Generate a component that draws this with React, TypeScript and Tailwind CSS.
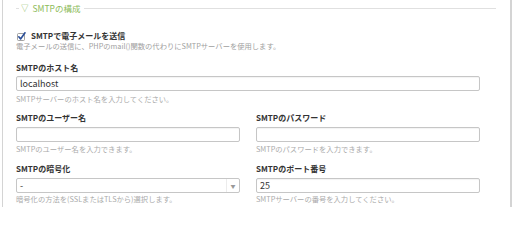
import React from 'react';

const font = { fontFamily: '"Noto Sans CJK JP", "Noto Sans", sans-serif' };

function Label({ children }: { children: React.ReactNode }) {
  return <div className="h-[10px] leading-[10px] text-[8px] font-bold text-[#333]">{children}</div>;
}

function Help({ children }: { children: React.ReactNode }) {
  return <div className="h-[10px] leading-[10px] text-[7.3px] text-[#aaa] whitespace-nowrap">{children}</div>;
}

function TextBox({ value, className = '' }: { value?: string; className?: string }) {
  return (
    <div className={`h-[15px] border border-[#c6c6c6] rounded-[2px] bg-white flex items-center pl-[3px] text-[9px] text-[#333] shadow-[inset_0_1px_1px_rgba(0,0,0,0.05)] ${className}`}>
      {value}
    </div>
  );
}

export default function App() {
  return (
    <div className="w-[512px] h-[207px] bg-white overflow-hidden" style={font}>
      <div className="ml-[2px] w-[510px] h-[207px] border-l-[1.5px] border-r-2 border-[#d4d4d4] pl-[13px]">
        <div className="w-[480px]">
          <div className="h-[16px] flex items-center">
            <div className="w-[3px] border-t border-[#e0e0e0]" />
            <div className="flex items-center gap-[4px] px-[2px] text-[8.5px] text-[#8dbb5a] leading-none">
              <span className="text-[7.5px]">▽</span>
              <span>SMTPの構成</span>
            </div>
            <div className="flex-1 ml-[2px] border-t border-[#e0e0e0]" />
          </div>

          <div className="w-[464px]">
            <div className="mt-[15px] h-[10px] flex items-center gap-[5px]">
              <svg width="9" height="9" viewBox="0 0 9 9" className="ml-[1px]">
                <rect x="0.5" y="1.5" width="7" height="7" fill="#fff" stroke="#8a8a8a" strokeWidth="0.8" rx="1" />
                <path d="M1.8 4.8 L3.6 7 L8 0.8" fill="none" stroke="#2b4f99" strokeWidth="1.6" strokeLinecap="round" strokeLinejoin="round" />
              </svg>
              <Label>SMTPで電子メールを送信</Label>
            </div>
            <div className="h-[10px] leading-[10px] text-[7.3px] text-[#a0a0a0] whitespace-nowrap">
              電子メールの送信に、PHPのmail()関数の代わりにSMTPサーバーを使用します。
            </div>

            <div className="mt-[12px]">
              <Label>SMTPのホスト名</Label>
            </div>
            <TextBox value="localhost" className="mt-[3px]" />
            <div className="mt-[3px]">
              <Help>SMTPサーバーのホスト名を入力してください。</Help>
            </div>

            <div className="mt-[9px] grid grid-cols-2 gap-x-[16px]">
              <div>
                <Label>SMTPのユーザー名</Label>
                <TextBox className="mt-[4px]" />
                <div className="mt-[2px]">
                  <Help>SMTPのユーザー名を入力できます。</Help>
                </div>
              </div>
              <div>
                <Label>SMTPのパスワード</Label>
                <TextBox className="mt-[4px]" />
                <div className="mt-[2px]">
                  <Help>SMTPのパスワードを入力できます。</Help>
                </div>
              </div>
            </div>

            <div className="mt-[10px] grid grid-cols-2 gap-x-[16px]">
              <div>
                <Label>SMTPの暗号化</Label>
                <div className="mt-[4px] h-[15px] border border-[#c6c6c6] rounded-[2px] bg-white flex items-center text-[9px] text-[#333]">
                  <span className="flex-1 pl-[3px]">-</span>
                  <span className="w-[13px] h-full border-l border-[#ececec] flex items-center justify-center text-[5px] text-[#999]">▼</span>
                </div>
                <div className="mt-[1px]">
                  <Help>暗号化の方法を(SSLまたはTLSから)選択します。</Help>
                </div>
              </div>
              <div>
                <Label>SMTPのポート番号</Label>
                <TextBox value="25" className="mt-[4px]" />
                <div className="mt-[1px]">
                  <Help>SMTPサーバーの番号を入力してください。</Help>
                </div>
              </div>
            </div>
          </div>
        </div>
      </div>
    </div>
  );
}
